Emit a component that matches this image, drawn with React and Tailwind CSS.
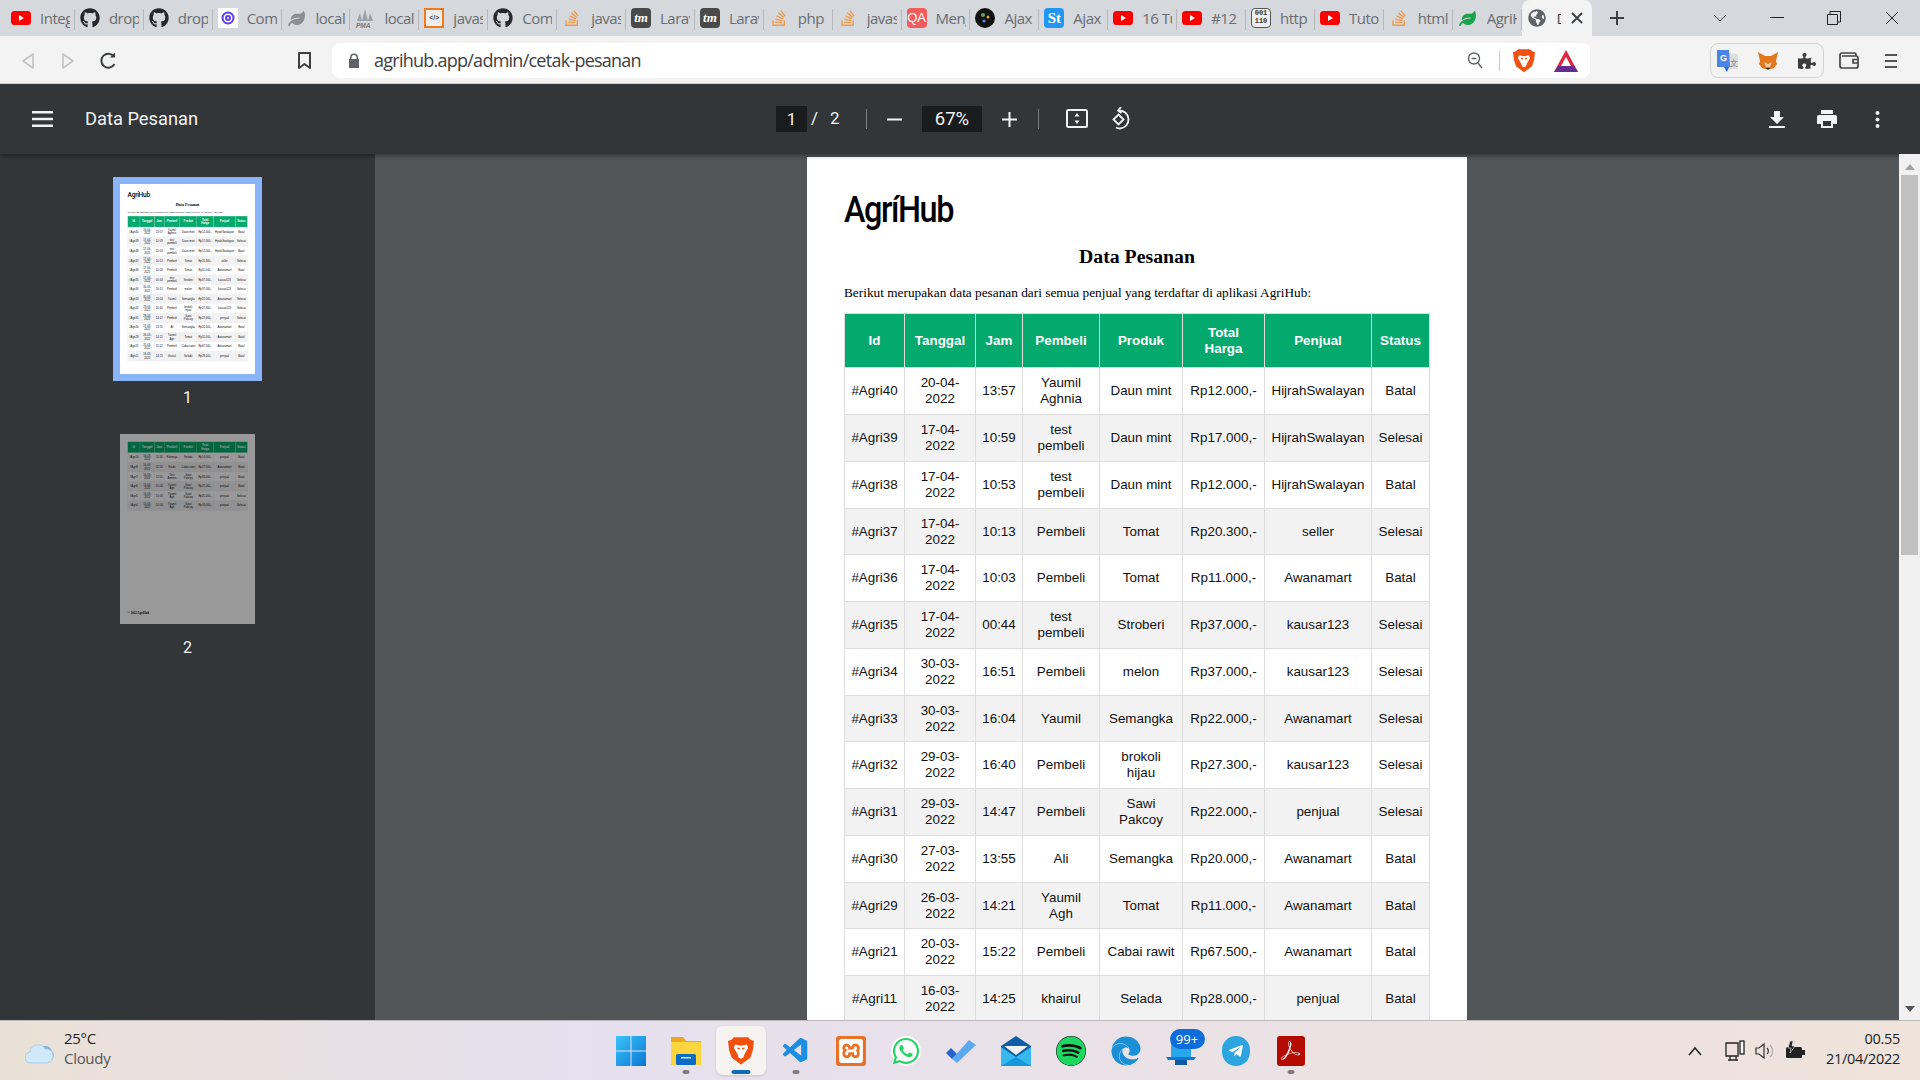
import { FaGithub, FaStackOverflow, FaWhatsapp, FaSpotify, FaEdge, FaTelegramPlane, FaPuzzlePiece, FaLeaf, FaGlobeAmericas } from 'react-icons/fa';
import { VscVscode } from 'react-icons/vsc';
import { SiXampp, SiAdobeacrobatreader } from 'react-icons/si';

// ---- favicons

const Yt = () => (
  <svg width="20" height="14" viewBox="0 0 20 14"><rect width="20" height="14" rx="3.5" fill="#f00" /><path d="M8 4l5 3-5 3z" fill="#fff" /></svg>
);
const Gh = () => <FaGithub size={20} color="#24292e" />;
const So = () => <FaStackOverflow size={18} color="#ef9a4a" />;
const Tm = () => (
  <span className="w-5 h-5 rounded-sm bg-[#4a4a4a] text-white text-[13px] leading-5 text-center font-bold italic font-['Liberation_Serif',serif]">tm</span>
);
const Dev = () => (
  <span className="w-5 h-5 bg-white flex items-center justify-center">
    <svg width="14" height="14" viewBox="0 0 14 14" fill="none" stroke="#5b3df0" strokeWidth="2"><circle cx="7" cy="7" r="5.5" /><circle cx="7" cy="7" r="2" /></svg>
  </span>
);
const Pma = () => (
  <svg width="20" height="20" viewBox="0 0 20 20"><path d="M10 1l3 12H7z M5 5l2 8H2z M15 5l3 8h-5z" fill="#9aa0a6" /><text x="1" y="19.5" fontSize="6.5" fontWeight="700" fontStyle="italic" fill="#777" fontFamily="Liberation Sans, sans-serif">PMA</text></svg>
);
const Code = () => (
  <span className="w-5 h-5 border-2 border-[#f07a1a] bg-[#eee] text-[7px] leading-4 text-center text-[#555] font-bold font-['Liberation_Sans',sans-serif]">&lt;/&gt;</span>
);
const Qa = () => <span className="w-5 h-5 rounded-sm bg-[#f45b5b] text-white text-[13px] leading-5 text-center font-['Liberation_Sans',sans-serif]">QA</span>;
const Ajx = () => (
  <svg width="20" height="20" viewBox="0 0 20 20"><circle cx="10" cy="10" r="10" fill="#111" /><circle cx="8" cy="7" r="2" fill="#5ba55b" /><circle cx="13" cy="9" r="1.5" fill="#d9a441" /><circle cx="9" cy="13" r="1.6" fill="#5588cc" /></svg>
);
const St = () => <span className="w-5 h-5 rounded-sm bg-[#2196f3] text-white text-[15px] leading-5 text-center font-bold font-['Liberation_Serif',serif]">St</span>;
const Bin = () => (
  <span className="w-5 h-5 rounded-sm border border-[#555] bg-[#eee] text-[7px] leading-[8px] text-center font-bold text-[#333] font-['Liberation_Mono',monospace]">001<br />110</span>
);
const Leaf = ({ color }) => <FaLeaf size={17} color={color} />;

const TABS = [
  [<Yt />, 'Integrasi'], [<Gh />, 'dropzone'], [<Gh />, 'dropzone'], [<Dev />, 'Composer'],
  [<Leaf color="#8a8f94" />, 'localhost'], [<Pma />, 'localhost'], [<Code />, 'javascript'], [<Gh />, 'Composer'],
  [<So />, 'javascript'], [<Tm />, 'Laravel'], [<Tm />, 'Laravel'], [<So />, 'php'],
  [<So />, 'javascript'], [<Qa />, 'Mengatasi'], [<Ajx />, 'Ajax'], [<St />, 'Ajax'],
  [<Yt />, '16 Tutorial'], [<Yt />, '#12'], [<Bin />, 'http'], [<Yt />, 'Tutorial'],
  [<So />, 'html'], [<Leaf color="#1aa34a" />, 'AgriHub'],
];

function Tab({ icon, title }) {
  return (
    <div className="w-[68.9px] shrink-0 h-full flex items-center relative pl-[4px]">
      <span className="w-[22px] flex justify-center shrink-0">{icon}</span>
      <span className="ml-[8px] w-[30px] overflow-hidden whitespace-nowrap text-[15px] text-[#6a6e73] font-['Open_Sans',sans-serif] tracking-[-0.5px]">{title}</span>
      <span className="absolute right-0 top-[9px] bottom-[6px] w-px bg-[#b5b8bc]" />
    </div>
  );
}

// ---- table

const COLS = [60, 71, 47, 77, 83, 82, 107, 58];
const HEAD = ['Id', 'Tanggal', 'Jam', 'Pembeli', 'Produk', 'Total\nHarga', 'Penjual', 'Status'];
const ROWS = [
  ['#Agri40', '20-04-\n2022', '13:57', 'Yaumil\nAghnia', 'Daun mint', 'Rp12.000,-', 'HijrahSwalayan', 'Batal'],
  ['#Agri39', '17-04-\n2022', '10:59', 'test\npembeli', 'Daun mint', 'Rp17.000,-', 'HijrahSwalayan', 'Selesai'],
  ['#Agri38', '17-04-\n2022', '10:53', 'test\npembeli', 'Daun mint', 'Rp12.000,-', 'HijrahSwalayan', 'Batal'],
  ['#Agri37', '17-04-\n2022', '10:13', 'Pembeli', 'Tomat', 'Rp20.300,-', 'seller', 'Selesai'],
  ['#Agri36', '17-04-\n2022', '10:03', 'Pembeli', 'Tomat', 'Rp11.000,-', 'Awanamart', 'Batal'],
  ['#Agri35', '17-04-\n2022', '00:44', 'test\npembeli', 'Stroberi', 'Rp37.000,-', 'kausar123', 'Selesai'],
  ['#Agri34', '30-03-\n2022', '16:51', 'Pembeli', 'melon', 'Rp37.000,-', 'kausar123', 'Selesai'],
  ['#Agri33', '30-03-\n2022', '16:04', 'Yaumil', 'Semangka', 'Rp22.000,-', 'Awanamart', 'Selesai'],
  ['#Agri32', '29-03-\n2022', '16:40', 'Pembeli', 'brokoli\nhijau', 'Rp27.300,-', 'kausar123', 'Selesai'],
  ['#Agri31', '29-03-\n2022', '14:47', 'Pembeli', 'Sawi\nPakcoy', 'Rp22.000,-', 'penjual', 'Selesai'],
  ['#Agri30', '27-03-\n2022', '13:55', 'Ali', 'Semangka', 'Rp20.000,-', 'Awanamart', 'Batal'],
  ['#Agri29', '26-03-\n2022', '14:21', 'Yaumil\nAgh', 'Tomat', 'Rp11.000,-', 'Awanamart', 'Batal'],
  ['#Agri21', '20-03-\n2022', '15:22', 'Pembeli', 'Cabai rawit', 'Rp67.500,-', 'Awanamart', 'Batal'],
  ['#Agri11', '16-03-\n2022', '14:25', 'khairul', 'Selada', 'Rp28.000,-', 'penjual', 'Batal'],
];
const ROWS_2 = [
  ['#Agri10', '16-03-\n2022', '11:30', 'Rahmiya', 'Selada', 'Rp14.000,-', 'penjual', 'Batal'],
  ['#Agri9', '16-03-\n2022', '11:10', 'Risda', 'Cabai rawit', 'Rp27.500,-', 'Awanamart', 'Batal'],
  ['#Agri7', '16-03-\n2022', '11:10', 'Titut\nAmrina', 'Sawi\nPakcoy', 'Rp33.000,-', 'penjual', 'Batal'],
  ['#Agri6', '15-03-\n2022', '10:00', 'Yaumil\nAgh', 'Sawi\nPakcoy', 'Rp27.000,-', 'penjual', 'Batal'],
  ['#Agri5', '15-03-\n2022', '10:00', 'Yaumil\nAgh', 'Sawi\nPakcoy', 'Rp25.000,-', 'penjual', 'Selesai'],
  ['#Agri4', '15-03-\n2022', '10:00', 'Yaumil\nAgh', 'Sawi\nPakcoy', 'Rp33.000,-', 'penjual', 'Selesai'],
];

function DataTable({ rows }) {
  return (
    <table className="w-[585px] table-fixed border-collapse text-[13.4px] leading-[16px] text-[#111] text-center font-['Liberation_Sans',sans-serif]">
      <colgroup>
        {COLS.map((w, i) => <col key={i} style={{ width: w }} />)}
      </colgroup>
      <thead>
        <tr className="h-[54px] bg-[#04aa6d] text-white">
          {HEAD.map((h) => <th key={h} className="border border-[#ddd] whitespace-pre-line font-bold p-0">{h}</th>)}
        </tr>
      </thead>
      <tbody>
        {rows.map((r, i) => (
          <tr key={r[0]} className={`${i % 4 === 3 ? 'h-[46px]' : 'h-[47px]'} ${i % 2 ? 'bg-[#f2f2f2]' : 'bg-white'}`}>
            {r.map((c, j) => <td key={j} className="border border-[#ddd] whitespace-pre-line p-0">{c}</td>)}
          </tr>
        ))}
      </tbody>
    </table>
  );
}

function FirstPage() {
  return (
    <div className="w-[660px] h-[929px] bg-white px-[37px] shrink-0">
      <div className="pt-[28px] h-[84px] text-[36px] leading-[50px] font-medium text-black tracking-[-1.6px] font-['Roboto',sans-serif] origin-left scale-x-90">AgríHub</div>
      <div className="mt-[3px] text-center text-[19.8px] leading-[24px] font-bold text-black font-['Liberation_Serif',serif]">Data Pesanan</div>
      <p className="mt-[17px] h-[28px] text-[13.3px] leading-[16px] text-black font-['Liberation_Serif',serif]">Berikut merupakan data pesanan dari semua penjual yang terdaftar di aplikasi AgriHub:</p>
      <DataTable rows={ROWS} />
    </div>
  );
}

function SecondPage() {
  return (
    <div className="w-[660px] h-[929px] bg-white px-[37px] pt-[37px] shrink-0 flex flex-col">
      <DataTable rows={ROWS_2} />
      <p className="mt-auto mb-[41px] text-[15px] font-bold font-['Liberation_Serif',serif]">© 2022 AgriHub</p>
    </div>
  );
}

function Thumb({ n, selected, dim, children }) {
  return (
    <div className="flex flex-col items-center">
      <div className={`relative w-[135px] h-[190px] overflow-hidden bg-white ${selected ? 'outline-[7px] outline outline-[#8ab4f8]' : ''}`}>
        <div className="origin-top-left scale-[0.2045]">{children}</div>
        {dim && <div className="absolute inset-0 bg-[#000]/40" />}
      </div>
      <span className="mt-[12px] text-[16px] text-[#f1f3f4] font-['Roboto',sans-serif]">{n}</span>
    </div>
  );
}

// ---- toolbar bits

const BraveIcon = ({ size = 22 }) => (
  <svg width={size} height={size * 1.15} viewBox="0 0 22 25">
    <path d="M5 1h12l2 2 3 1-1 8-2 6-8 6-8-6-2-6-1-8 3-1z" fill="#f1500f" />
    <path d="M6 7l5 1 5-1 1 3-3 5-1 3-2 1-2-1-1-3-3-5z" fill="#fff" />
    <path d="M8 10l2 1 M14 10l-2 1" stroke="#f1500f" strokeWidth="1.2" />
  </svg>
);

const IconWrap = ({ className, children }) => <span className={`flex items-center justify-center ${className}`}>{children}</span>;

function BrowserToolbar() {
  return (
    <div className="h-[48px] bg-[#f3f3f3] border-b border-[#d8d8d8] flex items-start pt-[7px] shrink-0">
      <IconWrap className="w-[22px] h-[35px] ml-[17px]">
        <svg width="14" height="18" viewBox="0 0 14 18" fill="none" stroke="#c2c2c2" strokeWidth="1.6" strokeLinejoin="round"><path d="M12 2v14L2 9z" /></svg>
      </IconWrap>
      <IconWrap className="w-[22px] h-[35px] ml-[18px]">
        <svg width="14" height="18" viewBox="0 0 14 18" fill="none" stroke="#c2c2c2" strokeWidth="1.6" strokeLinejoin="round"><path d="M2 2v14l10-7z" /></svg>
      </IconWrap>
      <IconWrap className="w-[22px] h-[35px] ml-[18px]">
        <svg width="19" height="19" viewBox="0 0 19 19" fill="none" stroke="#3c4043" strokeWidth="2"><path d="M15.5 13a7 7 0 1 1-.5-7.5" /><path d="M16 1.5v5h-5" fill="#3c4043" stroke="none" /></svg>
      </IconWrap>
      <IconWrap className="w-[20px] h-[35px] ml-[175px]">
        <svg width="15" height="19" viewBox="0 0 15 19" fill="none" stroke="#3c4043" strokeWidth="2" strokeLinejoin="round"><path d="M2 2h11v15l-5.5-4L2 17z" /></svg>
      </IconWrap>
      <div className="ml-[18px] w-[1258px] h-[35px] bg-white rounded-lg flex items-center">
        <svg className="ml-[16px]" width="12" height="15" viewBox="0 0 12 15" fill="#5f6368"><path d="M2 6V4.5a4 4 0 0 1 8 0V6h1v9H1V6zm1.5 0h5V4.500a2.500 2.500 0 0 0-5 0z" /></svg>
        <span className="ml-[14px] text-[18px] text-[#3c4043] font-['Open_Sans',sans-serif] tracking-[-0.75px] whitespace-nowrap">agrihub.app/admin/cetak-pesanan</span>
        <span className="ml-auto w-5 flex justify-center">
          <svg width="17" height="19" viewBox="0 0 17 19" fill="none" stroke="#5f6368" strokeWidth="1.4"><circle cx="7" cy="7.500" r="5.500" /><path d="M4.500 7.500h5M11 12l4 5" /></svg>
        </span>
        <span className="ml-[14px] w-px h-[20px] bg-[#c8c8c8]" />
        <span className="ml-[13px]"><BraveIcon /></span>
        <svg className="ml-[19px] mr-[12px]" width="24" height="22" viewBox="0 0 24 22">
          <path d="M12 0l12 22H0z" fill="#e0263c" />
          <path d="M0 22l4-6h16l4 6z" fill="#662d91" />
          <path d="M12 7l5 9H7z" fill="#fff" />
        </svg>
      </div>
      <div className="ml-[120px] w-[114px] h-[35px] rounded-lg border border-[#d3d3d3] flex items-center justify-between pl-[5px] pr-[7px]">
        <svg width="22" height="24" viewBox="0 0 22 24"><path d="M10 4l12 1v15H12z" fill="#ddd" /><path d="M1 1h12l1 17H1z" fill="#4a86e8" /><path d="M8 18l5 0-2 5z" fill="#3367c9" /><text x="4" y="12" fontSize="9" fontWeight="700" fill="#fff" fontFamily="Liberation Sans, sans-serif">G</text><text x="14" y="17" fontSize="8" fill="#777" fontFamily="Liberation Sans, sans-serif">文</text></svg>
        <svg width="22" height="20" viewBox="0 0 22 20"><path d="M1 1l7 4h6l7-4-2 9 1 3-3 4-3 1h-6l-3-1-3-4 1-3z" fill="#e2761b" /><path d="M7 11l4 2 4-2-2 5h-4z" fill="#f6c9a1" /><path d="M9 17h4l-2 2z" fill="#222" /></svg>
        <FaPuzzlePiece size={18} color="#3c3c3c" />
      </div>
      <IconWrap className="w-[24px] h-[35px] ml-[13px]">
        <svg width="20" height="17" viewBox="0 0 20 17" fill="none" stroke="#444" strokeWidth="1.700"><path d="M17 4V2.500a1.500 1.500 0 0 0-1.500-1.500H3a2 2 0 0 0-2 2v11a2 2 0 0 0 2 2h14a2 2 0 0 0 2-2V6a2 2 0 0 0-2-2H3" /><path d="M19 7.500h-5v3.500h5" /></svg>
      </IconWrap>
      <IconWrap className="w-[18px] h-[35px] ml-[21px]">
        <svg width="14" height="16" viewBox="0 0 14 16" stroke="#555" strokeWidth="2"><path d="M1 2h12M1 8h12M1 14h12" /></svg>
      </IconWrap>
    </div>
  );
}

function PdfToolbar() {
  const Divider = ({ className = '' }) => <span className={`block w-px h-[20px] bg-[#7b7e80] ${className}`} />;
  return (
    <div className="h-[70px] bg-[#323639] shadow-[0_2px_4px_rgba(0,0,0,0.35)] relative z-10 flex items-center text-[#f1f3f4] font-['Roboto',sans-serif] shrink-0">
      <svg className="ml-[32px]" width="21" height="16" viewBox="0 0 21 16" fill="#f1f3f4"><path d="M0 0h21v2.500H0zM0 6.700h21v2.500H0zM0 13.500h21V16H0z" /></svg>
      <span className="ml-[32px] w-[576px] text-[18.300px] whitespace-nowrap">Data Pesanan</span>
      <span className="ml-[115px] w-[31px] h-[26px] bg-[#191b1c] text-center text-[17px] leading-[26px]">1</span>
      <span className="ml-[4px] text-[17px]">/</span>
      <span className="ml-[12px] text-[17px] w-[36px]">2</span>
      <Divider />
      <svg className="ml-[20px]" width="15" height="15" viewBox="0 0 15 15" fill="#f1f3f4"><path d="M0 6.500h15v2H0z" /></svg>
      <span className="ml-[20px] w-[60px] h-[26px] bg-[#191b1c] text-center text-[18.500px] leading-[26px]">67%</span>
      <svg className="ml-[20px]" width="15" height="15" viewBox="0 0 15 15" fill="#f1f3f4"><path d="M0 6.500h15v2H0zM6.500 0h2v15h-2z" /></svg>
      <Divider className="ml-[21px]" />
      <svg className="ml-[27px]" width="22" height="20" viewBox="0 0 22 20" fill="none" stroke="#f1f3f4" strokeWidth="2"><rect x="1" y="1" width="20" height="17" rx="1.500" /><path d="M11 4l2.500 3.500h-5zM11 15l2.500-3.500h-5z" fill="#f1f3f4" stroke="none" /></svg>
      <svg className="ml-[23px]" width="22" height="24" viewBox="0 0 22 24" fill="none" stroke="#f1f3f4" strokeWidth="1.800"><path d="M8 3.500a9 9 0 1 1 1 18c-1.500 0-2.800-.4-4-1" /><path d="M10 0L7 3.500l3.500 2.500" /><path d="M7.500 7.500l5 5-5 5-5-5z" /></svg>
      <svg className="ml-[636px]" width="16" height="17" viewBox="0 0 16 17" fill="#f1f3f4"><path d="M5 0h6v6h4l-7 7-7-7h4zM0 15h16v2H0z" /></svg>
      <svg className="ml-[32px]" width="20" height="18" viewBox="0 0 20 18" fill="#f1f3f4"><path d="M4 0h12v4H4zM2 5h16a2 2 0 0 1 2 2v7h-4v4H4v-4H0V7a2 2 0 0 1 2-2zm4 6v5h8v-5z" /></svg>
      <svg className="ml-[38px]" width="5" height="17" viewBox="0 0 5 17" fill="#f1f3f4"><circle cx="2.500" cy="2" r="2" /><circle cx="2.500" cy="8.500" r="2" /><circle cx="2.500" cy="15" r="2" /></svg>
    </div>
  );
}

// ---- taskbar

const Slot = ({ active, dot, children }) => (
  <div className={`relative w-[50px] h-[49px] mx-[2.500px] rounded-md flex items-center justify-center ${active ? 'bg-[#f6f2f0] shadow-sm' : ''}`}>
    {children}
    {dot === 'run' && <span className="absolute bottom-[1px] left-1/2 -translate-x-1/2 w-[7px] h-[4px] rounded-full bg-[#7d7d7d]" />}
    {active && <span className="absolute bottom-[1px] left-1/2 -translate-x-1/2 w-[19px] h-[4px] rounded-full bg-[#0f6cbd]" />}
  </div>
);

function Taskbar() {
  return (
    <div className="h-[60px] shrink-0 border-t border-[#bdb9bb] bg-gradient-to-r from-[#eae1d5] via-[#e6e0ef] via-30% to-[#efe3da] relative z-20 flex items-center font-['Open_Sans',sans-serif]">
      <svg className="ml-[25px]" width="30" height="26" viewBox="0 0 30 26">
        <path d="M14 12a7 7 0 0 1 13 1 6 6 0 0 1-2 10H14z" fill="#7fb2e0" />
        <path d="M6 25a5.500 5.500 0 0 1-1-11 8 8 0 0 1 15-3 7 7 0 0 1 2 14z" fill="#cfe9fa" stroke="#a9cfe8" />
      </svg>
      <div className="ml-[9px] mb-[6px] w-[539px] text-[15px] leading-[20px] tracking-[-0.3px]">
        <p className="text-[#222]">25°C</p>
        <p className="text-[#555]">Cloudy</p>
      </div>
      <div className="flex items-center">
        <Slot>
          <svg width="30" height="30" viewBox="0 0 30 30">
            <defs><linearGradient id="win" x1="0" y1="0" x2="1" y2="1"><stop offset="0" stopColor="#3cc3f9" /><stop offset="1" stopColor="#0a78d4" /></linearGradient></defs>
            <path d="M0 0h14.500v14.500H0zM15.500 0H30v14.500H15.500zM0 15.500h14.500V30H0zM15.500 15.500H30V30H15.500z" fill="url(#win)" />
          </svg>
        </Slot>
        <Slot dot="run">
          <svg width="30" height="28" viewBox="0 0 30 28"><path d="M0 0h12l3 4H30v24H0z" fill="#e9a91f" /><rect y="5" width="30" height="23" fill="#fcd53f" /><rect x="5" y="17" width="20" height="11" rx="1.500" fill="#0a6cc2" /><rect x="10" y="20" width="10" height="1.500" fill="#cfe6fa" /></svg>
        </Slot>
        <Slot active><BraveIcon size={26} /></Slot>
        <Slot dot="run"><VscVscode size={30} color="#1c8fe0" /></Slot>
        <Slot>
          <span className="w-[30px] h-[30px] rounded-[3px] bg-[#e8722a] flex items-center justify-center"><SiXampp size={24} color="#fff" /></span>
        </Slot>
        <Slot><span className="w-[30px] h-[30px] rounded-full bg-white flex items-center justify-center"><FaWhatsapp size={30} color="#25d366" /></span></Slot>
        <Slot>
          <svg width="30" height="24" viewBox="0 0 30 24"><path d="M0 14l5-5 6 6-5 5z" fill="#2564cf" /><path d="M6 20L23 1l7 5L11 24z" fill="#5ba9f0" /></svg>
        </Slot>
        <Slot>
          <svg width="30" height="30" viewBox="0 0 30 30"><path d="M0 10L15 0l15 10v20H0z" fill="#0c5ea8" /><path d="M3 10h24L15 19z" fill="#f1f1f1" /><path d="M0 11l15 10 15-10v19H0z" fill="#39b8ee" /><path d="M0 30l15-9 15 9z" fill="#1597dc" /></svg>
        </Slot>
        <Slot><FaSpotify size={30} color="#1ed760" className="bg-[#111] rounded-full" /></Slot>
        <Slot><FaEdge size={30} color="#1a8fd6" /></Slot>
        <Slot>
          <svg width="30" height="28" viewBox="0 0 30 28"><path d="M5 3h20v19H5z" fill="#28a8ea" /><path d="M0 20h30l-2 3H2z" fill="#0f78d4" /><path d="M9 23h12v5H9z" fill="#0f5aa8" /></svg>
          <span className="absolute top-[3px] left-[14px] w-[35px] h-[20px] rounded-full bg-[#0f6cdb] text-white text-[13px] leading-[20px] text-center">99+</span>
        </Slot>
        <Slot>
          <span className="w-[28px] h-[30px] rounded-full bg-[#2ca5e0] flex items-center justify-center"><FaTelegramPlane size={16} color="#fff" /></span>
        </Slot>
        <Slot dot="run">
          <span className="w-[28px] h-[30px] rounded-[3px] bg-[#b30b00] flex items-center justify-center"><SiAdobeacrobatreader size={19} color="#fff" /></span>
        </Slot>
      </div>
      <svg className="ml-[369px]" width="16" height="10" viewBox="0 0 16 10" fill="none" stroke="#222" strokeWidth="1.500"><path d="M2 9l6-7 6 7" /></svg>
      <svg className="ml-[22px]" width="20" height="22" viewBox="0 0 20 22" fill="none" stroke="#222" strokeWidth="1.300"><path d="M1 3h12v13H1zM5 16v4h6v-4M3 20h10" /><rect x="15" y="1" width="4" height="13" fill="#fff" /></svg>
      <svg className="ml-[10px]" width="18" height="20" viewBox="0 0 18 20" fill="none" stroke="#333" strokeWidth="1.200"><path d="M1 7h3l5-4v14l-5-4H1z" /><path d="M12 7a4 4 0 0 1 0 6" /><path d="M15 4a8 8 0 0 1 0 12" stroke="#aaa" /></svg>
      <svg className="ml-[12px]" width="21" height="20" viewBox="0 0 21 20"><rect x="1" y="6" width="16" height="11" rx="1.500" fill="#222" /><rect x="17" y="9" width="3" height="5" fill="#222" /><path d="M5 0L3 7h3l-1 5 5-7H7l1-5z" fill="#222" stroke="#eee" strokeWidth=".6" /></svg>
      <div className="ml-auto mr-[20px] mb-[3px] text-right text-[14.500px] leading-[20px] text-[#222] tracking-[-0.3px]">
        <p>00.55</p>
        <p>21/04/2022</p>
      </div>
    </div>
  );
}

export default function App() {
  return (
    <div className="w-[1920px] h-[1080px] flex flex-col overflow-hidden">
      {/* tab strip */}
      <div className="h-[36px] bg-[#d5d8dc] flex items-stretch pl-[6px] shrink-0">
        {TABS.map(([icon, title], i) => <Tab key={i} icon={icon} title={title} />)}
        <div className="w-[70px] shrink-0 h-full bg-[#f3f3f3] rounded-t-lg flex items-center pl-[6px]">
          <FaGlobeAmericas size={18} color="#5f6368" />
          <span className="ml-[11px] w-[4px] overflow-hidden text-[15px] text-[#444] font-['Open_Sans',sans-serif]">D</span>
          <svg className="ml-[10px]" width="12" height="12" viewBox="0 0 12 12" stroke="#3c4043" strokeWidth="1.800"><path d="M1 1l10 10M11 1L1 11" /></svg>
        </div>
        <svg className="ml-[17px] self-center" width="16" height="16" viewBox="0 0 16 16" stroke="#3c4043" strokeWidth="2"><path d="M8 1v14M1 8h14" /></svg>
        <svg className="ml-[88px] self-center" width="14" height="8" viewBox="0 0 14 8" fill="none" stroke="#3c4043" strokeWidth="1"><path d="M1 1l6 6 6-6" /></svg>
        <svg className="ml-[43px] self-center" width="14" height="2" viewBox="0 0 14 2"><path d="M0 0h14v1H0z" fill="#222" /></svg>
        <svg className="ml-[43px] self-center" width="14" height="14" viewBox="0 0 14 14" fill="none" stroke="#222"><path d="M.5 3.500h10v10H.5zM3 3V.5h10.500V11H11" /></svg>
        <svg className="ml-[44px] self-center" width="14" height="14" viewBox="0 0 14 14" fill="none" stroke="#222"><path d="M1 1l12 12M13 1L1 13" /></svg>
      </div>

      <BrowserToolbar />
      <PdfToolbar />

      {/* viewer body */}
      <div className="flex-1 min-h-0 flex">
        <aside className="w-[375px] shrink-0 bg-[#323639] flex flex-col items-center pt-[30px] gap-[24px] overflow-hidden">
          <Thumb n="1" selected><FirstPage /></Thumb>
          <Thumb n="2" dim><SecondPage /></Thumb>
        </aside>
        <main className="flex-1 bg-[#525659] flex justify-center pt-[3px] overflow-hidden">
          <FirstPage />
        </main>
        <div className="w-[21px] shrink-0 bg-[#f1f1f1] flex flex-col items-center relative z-20">
          <svg className="mt-[10px]" width="10" height="6" viewBox="0 0 10 6" fill="#a3a3a3"><path d="M5 0l5 6H0z" /></svg>
          <div className="mt-[5px] w-[17px] h-[380px] bg-[#c1c1c1]" />
          <svg className="mt-auto mb-[8px]" width="10" height="6" viewBox="0 0 10 6" fill="#555"><path d="M5 6l5-6H0z" /></svg>
        </div>
      </div>

      <Taskbar />
    </div>
  );
}
